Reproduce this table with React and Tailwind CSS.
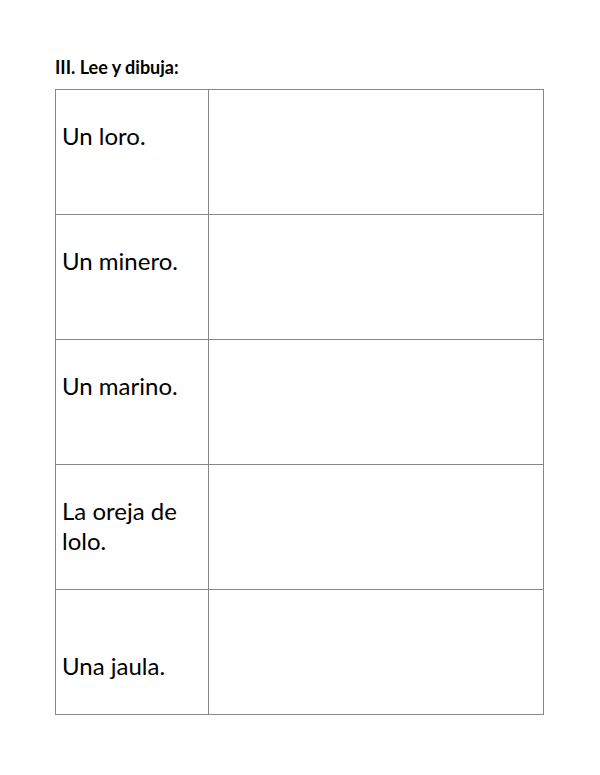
export default function App() {
  const rows = [
    { lines: ["Un loro."], pad: "pt-[31px]" },
    { lines: ["Un minero."], pad: "pt-[31px]" },
    { lines: ["Un marino."], pad: "pt-[31px]" },
    { lines: ["La oreja de", "lolo."], pad: "pt-[31px]" },
    { lines: ["Una jaula."], pad: "pt-[61px]" },
  ];
  return (
    <div className="w-[600px] h-[775px] bg-white text-black" style={{ fontFamily: "Lato, 'Liberation Sans', sans-serif" }}>
      <div className="pl-[55px] pt-[57px]">
        <div className="text-[18px] leading-[21px] font-bold">III. Lee y dibuja:</div>
        <div className="mt-[11px] w-[489px] border-t border-l border-[#888]">
          {rows.map((r, i) => (
            <div key={i} className="flex h-[125px] border-b border-[#888]">
              <div className={`w-[153px] border-r border-[#888] pl-[6px] ${r.pad} text-[24px] leading-[30px]`}>
                {r.lines.map((l, j) => (
                  <div key={j}>{l}</div>
                ))}
              </div>
              <div className="flex-1 border-r border-[#888]" />
            </div>
          ))}
        </div>
      </div>
    </div>
  );
}
